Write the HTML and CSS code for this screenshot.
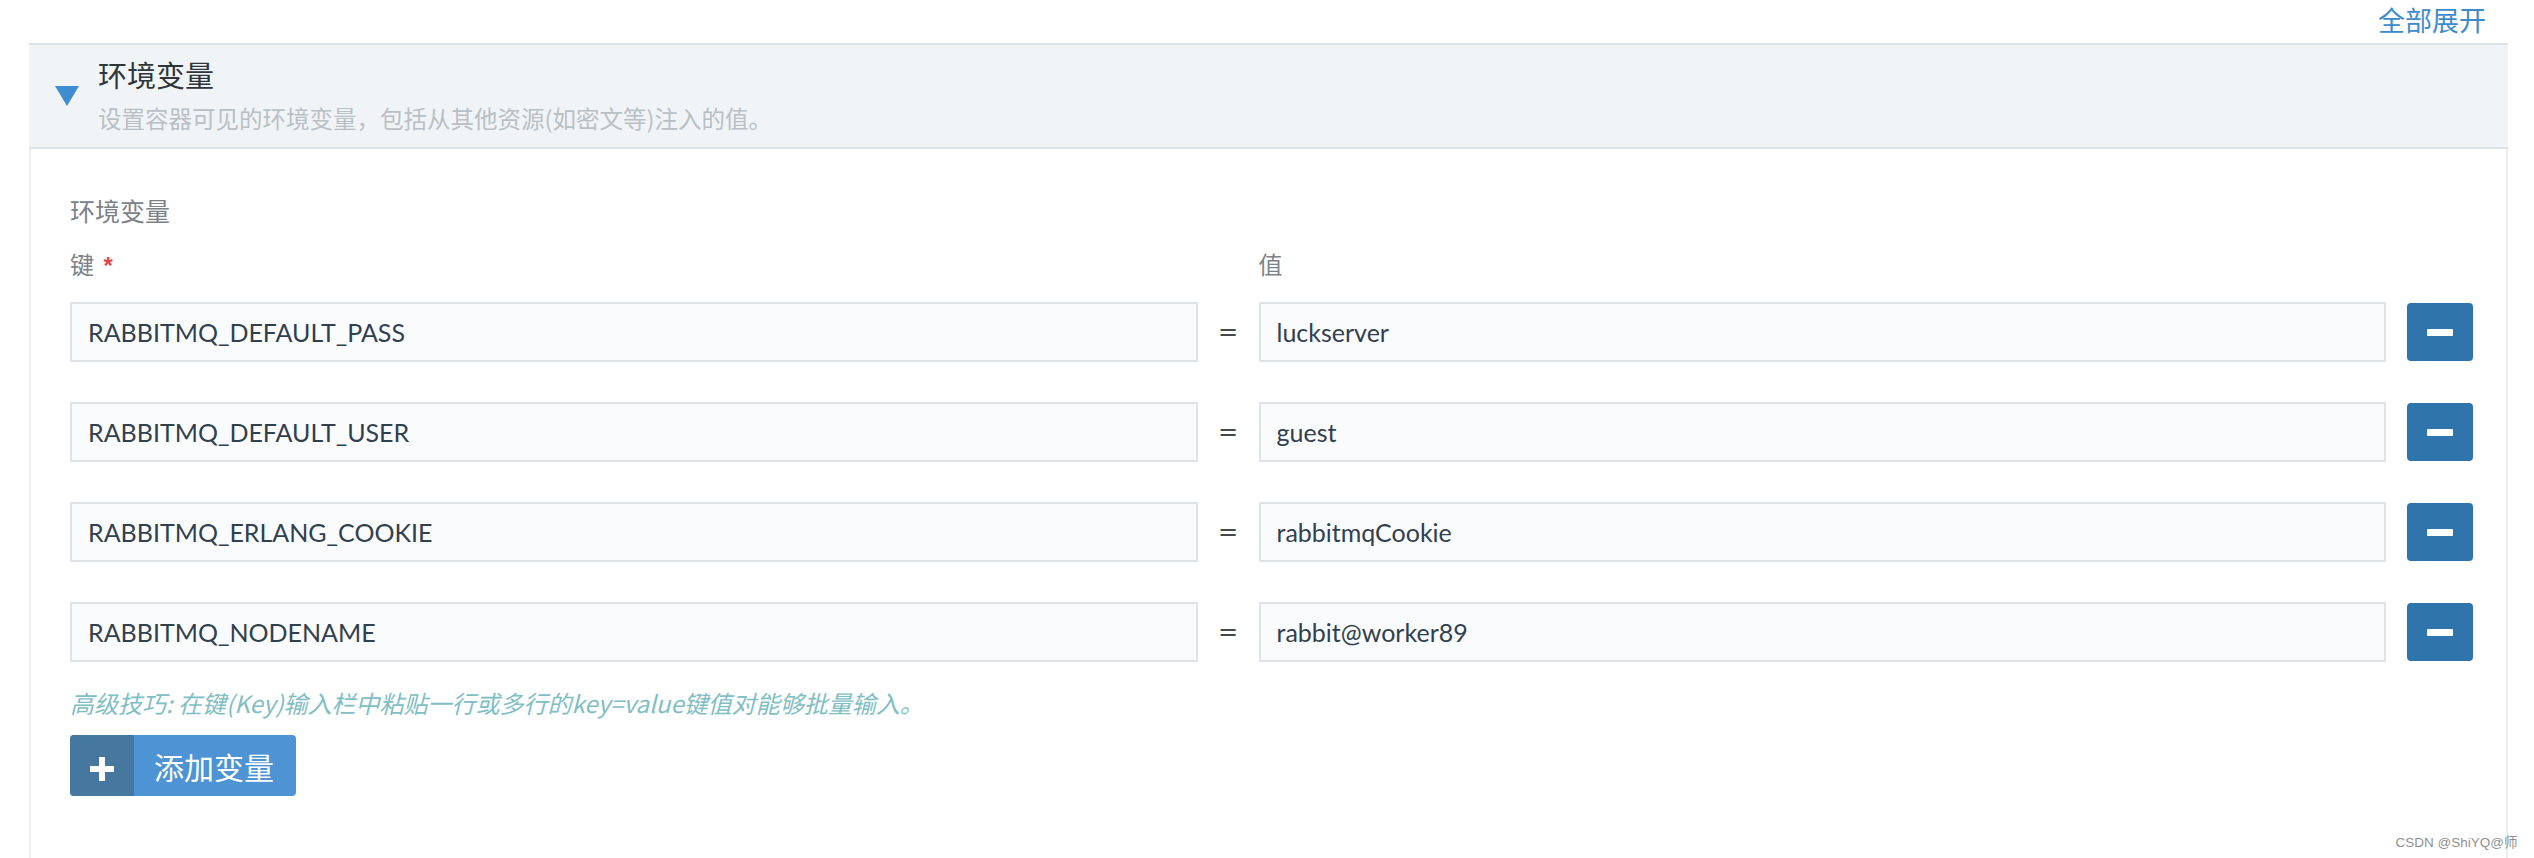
FILE: index.html
```html
<!DOCTYPE html>
<html lang="zh-CN">
<head>
<meta charset="utf-8">
<title>环境变量</title>
<link rel="stylesheet" href="styles.css">
</head>
<body>
<div class="page">
  <div class="toolbar">
    <a class="expand-all" href="#">全部展开</a>
  </div>
  <section class="panel">
    <header class="panel-head">
      <span class="caret"></span>
      <div class="head-text">
        <h2 class="head-title">环境变量</h2>
        <p class="head-desc">设置容器可见的环境变量，包括从其他资源(如密文等)注入的值。</p>
      </div>
    </header>
    <div class="panel-body">
      <div class="section-label">环境变量</div>
      <div class="env-grid col-labels">
        <label class="col-label">键 <span class="req">*</span></label>
        <span></span>
        <label class="col-label">值</label>
        <span></span>
      </div>
      <div class="env-rows">
        <div class="env-grid">
          <div class="field">RABBITMQ_DEFAULT_PASS</div>
          <span class="eq">=</span>
          <div class="field">luckserver</div>
          <button class="remove-btn" type="button"><span class="minus"></span></button>
        </div>
        <div class="env-grid">
          <div class="field">RABBITMQ_DEFAULT_USER</div>
          <span class="eq">=</span>
          <div class="field">guest</div>
          <button class="remove-btn" type="button"><span class="minus"></span></button>
        </div>
        <div class="env-grid">
          <div class="field">RABBITMQ_ERLANG_COOKIE</div>
          <span class="eq">=</span>
          <div class="field">rabbitmqCookie</div>
          <button class="remove-btn" type="button"><span class="minus"></span></button>
        </div>
        <div class="env-grid">
          <div class="field">RABBITMQ_NODENAME</div>
          <span class="eq">=</span>
          <div class="field">rabbit@worker89</div>
          <button class="remove-btn" type="button"><span class="minus"></span></button>
        </div>
      </div>
      <p class="hint">高级技巧: 在键(Key)输入栏中粘贴一行或多行的key=value键值对能够批量输入。</p>
      <button class="add-btn" type="button">
        <span class="add-icon">
          <svg width="24" height="24" viewBox="0 0 24 24"><rect x="9" y="0" width="6" height="24" fill="#fff"/><rect x="0" y="9" width="24" height="6" fill="#fff"/></svg>
        </span>
        <span class="add-text">添加变量</span>
      </button>
    </div>
  </section>
  <div class="watermark">CSDN @ShiYQ@师</div>
</div>
</body>
</html>
```

FILE: styles.css
```css
html, body {
  margin: 0;
  padding: 0;
  background: #ffffff;
}

body {
  font-family: Lato, "Noto Sans CJK SC", sans-serif;
  overflow: hidden;
}

.page {
  position: relative;
  height: 100vh;
  display: flex;
  flex-direction: column;
}

.toolbar {
  height: 43px;
  display: flex;
  justify-content: flex-end;
  align-items: flex-start;
  padding-right: 48px;
  box-sizing: border-box;
}

.expand-all {
  font-family: "Noto Sans CJK SC", sans-serif;
  font-size: 27px;
  line-height: 39px;
  color: #3d8bcb;
  text-decoration: none;
}

.panel {
  flex: 1;
  margin: 0 26px 0 29px;
  border-left: 2px solid #eceef0;
  border-right: 2px solid #eceef0;
  display: flex;
  flex-direction: column;
}

.panel-head {
  display: flex;
  align-items: center;
  background: #f1f4f6;
  border-top: 2px solid #dde3e6;
  border-bottom: 2px solid #dde3e6;
  padding: 12px 0 14px 26px;
  margin: 0 -2px;
}

.caret {
  width: 0;
  height: 0;
  border-left: 12px solid transparent;
  border-right: 12px solid transparent;
  border-top: 20px solid #3f8dd1;
  margin-right: 19px;
  margin-top: 2px;
}

.head-text {
  display: flex;
  flex-direction: column;
}

.head-title {
  margin: 0;
  font-family: "Noto Sans CJK SC", sans-serif;
  font-size: 29px;
  line-height: 34px;
  font-weight: 400;
  color: #2f3539;
}

.head-desc {
  margin: 12px 0 0;
  font-family: "Noto Sans CJK SC", sans-serif;
  font-size: 23.5px;
  line-height: 30px;
  color: #b9c0c5;
}

.panel-body {
  padding: 45px 33px 0 39px;
}

.section-label {
  font-family: "Noto Sans CJK SC", sans-serif;
  font-size: 25px;
  line-height: 32px;
  color: #7c8288;
}

.env-grid {
  display: grid;
  grid-template-columns: 1fr 61px 1fr 87px;
  align-items: center;
}

.env-grid > .remove-btn {
  margin-left: 21px;
}

.col-labels {
  margin-top: 23px;
}

.col-label {
  font-family: "Noto Sans CJK SC", sans-serif;
  font-size: 24px;
  line-height: 30px;
  color: #7c8288;
}

.req {
  color: #e0464a;
  font-family: "Liberation Sans", sans-serif;
  font-size: 24px;
  font-weight: 700;
  line-height: 24px;
  margin-left: 4px;
}

.env-rows {
  margin-top: 23px;
  display: flex;
  flex-direction: column;
  gap: 40px;
}

.field {
  height: 60px;
  box-sizing: border-box;
  border: 2px solid #dfe3e6;
  background: #fafbfc;
  padding: 0 16px;
  display: flex;
  align-items: center;
  font-family: Lato, sans-serif;
  font-size: 25px;
  color: #323f4f;
  white-space: nowrap;
  overflow: hidden;
}

.eq {
  text-align: center;
  font-family: "DejaVu Sans", sans-serif;
  font-size: 24px;
  color: #44494e;
}

.remove-btn {
  width: 66px;
  height: 58px;
  border: 0;
  border-radius: 4px;
  background: #2f74ab;
  padding: 0;
  display: flex;
  align-items: center;
  justify-content: center;
}

.minus {
  width: 26px;
  height: 7px;
  background: #ffffff;
  border-radius: 1px;
}

.hint {
  margin: 26px 0 0;
  font-family: "Noto Sans CJK SC", sans-serif;
  font-style: italic;
  font-size: 24px;
  line-height: 30px;
  color: #7fbec4;
}

.add-btn {
  margin-top: 17px;
  height: 61px;
  border: 0;
  padding: 0;
  border-radius: 4px;
  overflow: hidden;
  display: flex;
  align-items: stretch;
  background: #4e94d4;
}

.add-icon {
  width: 64px;
  background: #45779f;
  display: flex;
  align-items: center;
  justify-content: center;
  padding-top: 6px;
  box-sizing: border-box;
}

.add-text {
  display: flex;
  align-items: center;
  padding: 0 22px 0 20px;
  font-family: "Noto Sans CJK SC", sans-serif;
  font-size: 30px;
  color: #ffffff;
}

.watermark {
  position: absolute;
  right: 17px;
  bottom: 7px;
  font-family: "Liberation Sans", Arial, sans-serif;
  font-size: 13.5px;
  color: rgba(90, 90, 90, 0.7);
}
```
